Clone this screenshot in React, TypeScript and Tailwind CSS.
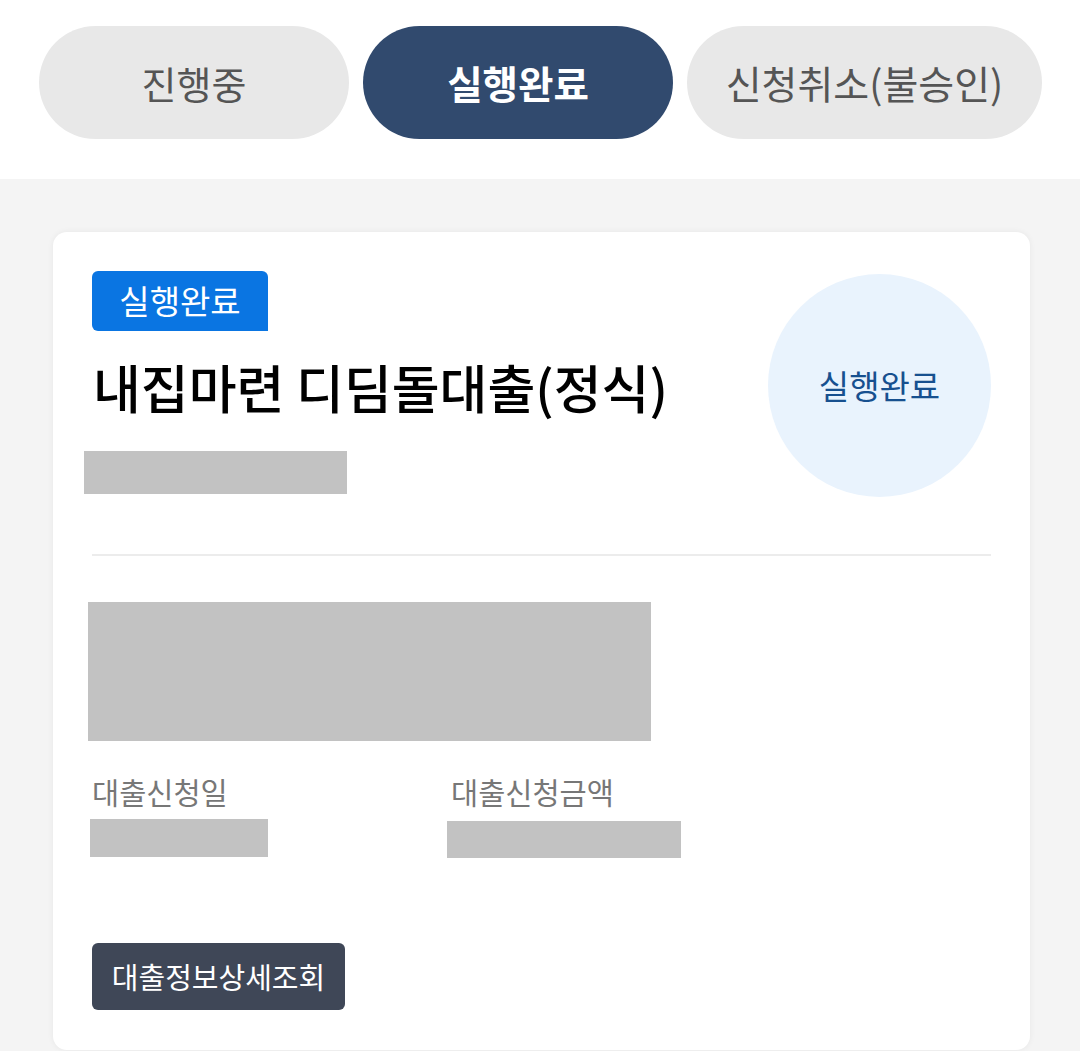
import React from "react";

const font = { fontFamily: '"Noto Sans CJK KR", "Noto Sans", sans-serif' };

export default function App() {
  return (
    <div className="w-[1080px] h-[1051px] overflow-hidden bg-white flex flex-col" style={font}>
      <div className="flex gap-[14px] pl-[39px] pt-[26px] pb-[40px] bg-white">
        <div className="w-[310px] h-[113px] rounded-full bg-[#e8e8e8] flex items-center justify-center text-[38px] text-[#555555]">
          진행중
        </div>
        <div className="w-[310px] h-[113px] rounded-full bg-[#314a6e] flex items-center justify-center text-[38.5px] font-bold text-white">
          실행완료
        </div>
        <div className="w-[355px] h-[113px] rounded-full bg-[#e8e8e8] flex items-center justify-center text-[39px] text-[#555555]">
          신청취소(불승인)
        </div>
      </div>
      <div className="flex-1 bg-[#f4f4f4] pt-[53px] pl-[53px] pr-[50px]">
        <div className="bg-white rounded-[14px] shadow-[0_0_6px_rgba(0,0,0,0.06)] h-[818px] px-[39px] pt-[39px]">
          <div className="flex justify-between">
            <div className="flex flex-col items-start">
              <div className="h-[60px] w-[176px] bg-[#0a75e2] rounded-[6px] rounded-br-none flex items-center justify-center text-white text-[33px]">
                실행완료
              </div>
              <div className="mt-[26px] text-[52px] font-medium text-black leading-[60px] ml-[1px]">
                내집마련 디딤돌대출(정식)
              </div>
              <div className="mt-[34px] -ml-[8px] w-[263px] h-[43px] bg-[#c2c2c2]" />
            </div>
            <div className="mt-[3px] w-[223px] h-[223px] rounded-full bg-[#e9f3fd] flex items-center justify-center text-[33px] text-[#17508f]">
              실행완료
            </div>
          </div>
          <div className="mt-[57px] h-[2px] bg-[#ececec]" />
          <div className="mt-[46px] -ml-[4px] w-[563px] h-[139px] bg-[#c2c2c2]" />
          <div className="mt-[30px] flex">
            <div className="w-[359px]">
              <div className="text-[29.5px] text-[#777777] leading-[40px]">대출신청일</div>
              <div className="mt-[8px] -ml-[2px] w-[178px] h-[38px] bg-[#c2c2c2]" />
            </div>
            <div>
              <div className="text-[29.5px] text-[#777777] leading-[40px]">대출신청금액</div>
              <div className="mt-[10px] -ml-[4px] w-[234px] h-[37px] bg-[#c2c2c2]" />
            </div>
          </div>
          <div className="mt-[85px] w-[253px] h-[67px] bg-[#3f4757] rounded-[6px] flex items-center justify-center text-white text-[29px]">
            대출정보상세조회
          </div>
        </div>
      </div>
    </div>
  );
}
